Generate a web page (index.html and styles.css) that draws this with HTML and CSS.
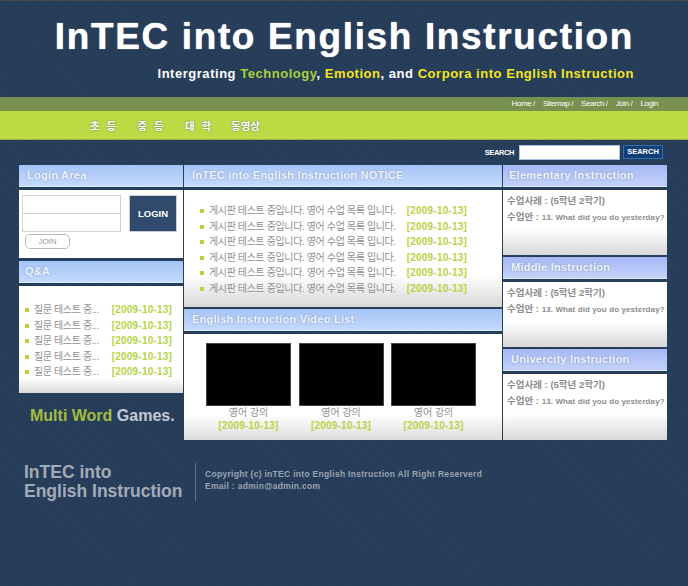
FILE: index.html
```html
<!DOCTYPE html>
<html lang="ko">

<head>
    <meta charset="UTF-8">
    <meta name="viewport" content="width=device-width, initial-scale=1.0">
    <title>InTEC into English Instruction</title>
    <link rel="stylesheet" href="styles.css">
</head>

<body>
    <header class="top">
        <h1>InTEC into English Instruction</h1>
        <p class="slogan">Intergrating <span class="green">Technology</span>, <span class="yellow">Emotion</span>, and <span class="yellow">Corpora into English Instruction</span></p>
    </header>

    <div class="util">
        <a>Home /</a><a>Sitemap /</a><a>Search /</a><a>Join /</a><a>Login</a>
    </div>
    <nav class="menu">
        <a class="m1">초 등</a><a class="m2">중 등</a><a class="m3">대 학</a><a class="m4">동영상</a>
    </nav>

    <form class="search">
        <label>SEARCH</label>
        <input type="text" class="search-input">
        <button type="button" class="search-btn">SEARCH</button>
    </form>

    <main class="columns">
        <div class="col col-left">
            <h2 class="bar">Login Area</h2>
            <section class="box login">
                <div class="login-row">
                    <div class="fields">
                        <input type="text">
                        <input type="password">
                    </div>
                    <button type="button" class="login-btn">LOGIN</button>
                </div>
                <button type="button" class="join-btn">JOIN</button>
            </section>
            <h2 class="bar bar-qa">Q&amp;A</h2>
            <section class="box qa">
                <ul class="list">
                    <li><span class="t">질문 테스트 중...</span><span class="date">[2009-10-13]</span></li>
                    <li><span class="t">질문 테스트 중...</span><span class="date">[2009-10-13]</span></li>
                    <li><span class="t">질문 테스트 중...</span><span class="date">[2009-10-13]</span></li>
                    <li><span class="t">질문 테스트 중...</span><span class="date">[2009-10-13]</span></li>
                    <li><span class="t">질문 테스트 중...</span><span class="date">[2009-10-13]</span></li>
                </ul>
            </section>
            <div class="games"><span class="olive">Multi Word</span> Games.</div>
        </div>

        <div class="col col-mid">
            <h2 class="bar">InTEC into English Instruction NOTICE</h2>
            <section class="box notice">
                <ul class="list">
                    <li><span class="t">게시판 테스트 중입니다. 영어 수업 목록 입니다.</span><span class="date">[2009-10-13]</span></li>
                    <li><span class="t">게시판 테스트 중입니다. 영어 수업 목록 입니다.</span><span class="date">[2009-10-13]</span></li>
                    <li><span class="t">게시판 테스트 중입니다. 영어 수업 목록 입니다.</span><span class="date">[2009-10-13]</span></li>
                    <li><span class="t">게시판 테스트 중입니다. 영어 수업 목록 입니다.</span><span class="date">[2009-10-13]</span></li>
                    <li><span class="t">게시판 테스트 중입니다. 영어 수업 목록 입니다.</span><span class="date">[2009-10-13]</span></li>
                    <li><span class="t">게시판 테스트 중입니다. 영어 수업 목록 입니다.</span><span class="date">[2009-10-13]</span></li>
                </ul>
            </section>
            <h2 class="bar bar-video">English Instruction Video List</h2>
            <section class="box videos">
                <div class="video"><div class="thumb"></div><p>영어 강의</p><span class="date">[2009-10-13]</span></div>
                <div class="video"><div class="thumb"></div><p>영어 강의</p><span class="date">[2009-10-13]</span></div>
                <div class="video"><div class="thumb"></div><p>영어 강의</p><span class="date">[2009-10-13]</span></div>
            </section>
        </div>

        <div class="col col-right">
            <h2 class="bar bar-purple bar-first">Elementary Instruction</h2>
            <section class="box lesson">
                <p>수업사례 : (5학년 2학기)</p>
                <p>수업안 : <span class="en">13. What did you do yesterday?</span></p>
            </section>
            <h2 class="bar bar-purple">Middle Instruction</h2>
            <section class="box lesson">
                <p>수업사례 : (5학년 2학기)</p>
                <p>수업안 : <span class="en">13. What did you do yesterday?</span></p>
            </section>
            <h2 class="bar bar-purple">Univercity Instruction</h2>
            <section class="box lesson">
                <p>수업사례 : (5학년 2학기)</p>
                <p>수업안 : <span class="en">13. What did you do yesterday?</span></p>
            </section>
        </div>
    </main>

    <footer class="bottom">
        <div class="foot-logo">InTEC into<br>English Instruction</div>
        <div class="foot-text">
            <p>Copyright (c) inTEC into English Instruction All Right Reserverd</p>
            <p>Email : admin@admin.com</p>
        </div>
    </footer>
</body>

</html>
```

FILE: styles.css
```css
* {
    box-sizing: border-box;
}

html, body {
    height: 100%;
}

body {
    margin: 0;
    font-family: "Liberation Sans", "Noto Sans CJK KR", sans-serif;
    color: #8a8a8a;
    overflow: hidden;
    border-top: 1px solid #4a4a50;
    background-color: #263d5a;
    background-image:
        repeating-linear-gradient(45deg, rgba(255, 255, 255, 0.012) 0 1px, transparent 1px 2px),
        repeating-linear-gradient(-45deg, rgba(0, 0, 0, 0.025) 0 1px, transparent 1px 2px);
}

h1, h2, p, ul {
    margin: 0;
    padding: 0;
}

/* header */
.top {
    height: 96px;
    padding: 16px 54px 0 0;
    text-align: right;
}

.top h1 {
    font-size: 37px;
    line-height: 40px;
    letter-spacing: 1.63px;
    color: #fff;
    text-shadow: 0 0 1px #fff;
}

.slogan {
    margin-top: 9px;
    font-size: 13px;
    line-height: 16px;
    font-weight: bold;
    letter-spacing: 0.53px;
    color: #fff;
}

.green {
    color: #a9cf3f;
}

.yellow {
    color: #f6e61a;
}

/* menus */
.util {
    height: 14px;
    padding-right: 30px;
    background: #789050;
    display: flex;
    justify-content: flex-end;
    gap: 8px;
    font-size: 8px;
    line-height: 14px;
    letter-spacing: -0.4px;
    color: #fff;
}

.menu {
    height: 29px;
    padding: 3px 0 0 90px;
    background: #bcdb44;
    border-bottom: 1px solid #98b23a;
    display: flex;
    font-size: 10.5px;
    font-weight: bold;
    line-height: 25px;
    color: #fff;
    text-shadow: 0 0 2px #666;
}

.m1, .m2, .m3 {
    width: 47.5px;
    letter-spacing: 2px;
}

.m3 {
    width: 46px;
}

.search {
    height: 25px;
    padding: 5px 25px 0 0;
    display: flex;
    justify-content: flex-end;
    align-items: flex-start;
}

.search label {
    font-size: 7.5px;
    font-weight: bold;
    line-height: 15px;
    letter-spacing: -0.4px;
    margin-right: 5px;
    color: #fff;
}

.search-input {
    width: 101px;
    height: 15px;
    margin: 0 3px 0 0;
    padding: 0;
    border: 1px solid #a9c4ee;
    background: #fff;
}

.search-btn {
    width: 40px;
    height: 14px;
    padding: 0;
    border: 1px solid #2e6fb0;
    background: #123f78;
    color: #fff;
    font: bold 7.5px/12px "Liberation Sans", sans-serif;
}

/* columns */
.columns {
    display: flex;
    gap: 1px;
    padding-left: 19px;
}

.col {
    display: flex;
    flex-direction: column;
}

.col-left {
    width: 164px;
}

.col-mid {
    width: 318px;
}

.col-right {
    width: 164px;
}

.bar {
    height: 22px;
    padding-left: 8px;
    font-size: 11px;
    line-height: 21px;
    letter-spacing: 0.25px;
    color: #eef3fb;
    text-shadow: 0 0 2px rgba(90, 110, 150, 0.6);
    background: linear-gradient(#a4c4f7, #c4d9fb);
    border-bottom: 1px solid #dfe9f8;
}

.bar-purple {
    background: linear-gradient(#a5b8f5, #c3d2fa);
}

.box {
    margin-top: 3px;
    background: linear-gradient(#fff 0, #fff 72%, #d8d8d8 100%);
}

/* login */
.login {
    height: 68px;
    padding: 5px 6px 0 3px;
    background: #fff;
}

.login-row {
    display: flex;
    justify-content: space-between;
}

.fields {
    width: 99px;
    height: 37px;
    display: flex;
    flex-direction: column;
}

.fields input {
    width: 100%;
    height: 19px;
    margin: 0;
    padding: 0;
    border: 1px solid #d2d2d2;
    background: #fff;
}

.fields input + input {
    margin-top: -1px;
}

.login-btn {
    width: 48px;
    height: 37px;
    padding: 0;
    border: 1px solid #c9ced4;
    background: #2f4a6c;
    color: #fff;
    font: bold 9.5px "Liberation Sans", sans-serif;
}

.join-btn {
    display: block;
    width: 45px;
    height: 15px;
    margin: 2px 0 0 3px;
    padding: 0;
    border: 1px solid #bbb;
    border-radius: 5px;
    background: #fff;
    color: #999;
    font: 8px "Liberation Sans", sans-serif;
}

.bar-qa {
    margin-top: 3px;
    padding-left: 6px;
}

/* lists */
.list {
    list-style: none;
}

.list li {
    display: flex;
    justify-content: space-between;
    height: 15.6px;
    padding-left: 6px;
    font-size: 10px;
    line-height: 15.6px;
    color: #909090;
    white-space: nowrap;
}

.list li::before {
    content: "";
    width: 4px;
    height: 4px;
    margin: 6px 5px 0 0;
    background: #b5d33f;
    flex: none;
}

.list .t {
    flex: 1;
    letter-spacing: -0.38px;
}

.date {
    font-size: 10px;
    font-weight: bold;
    letter-spacing: 0.2px;
    white-space: nowrap;
    color: #b7d444;
}

.qa {
    height: 107px;
    padding: 16px 11px 0 0;
    background: linear-gradient(#fff 0, #fff 86%, #d8d8d8 100%);
}

.games {
    height: 47px;
    padding: 13px 0 0 11px;
    font-size: 16px;
    line-height: 20px;
    font-weight: bold;
    color: #c3cad6;
}

.olive {
    color: #a3bc40;
}

.notice {
    height: 117px;
    padding: 13px 35px 0 10px;
}

.bar-video {
    margin-top: 2px;
}

.videos {
    height: 106px;
    padding: 9px 0 0 22px;
    display: flex;
    gap: 7.5px;
    background: linear-gradient(#fff 0, #fff 76%, #dcdcdc 100%);
}

.video {
    width: 85px;
    text-align: center;
}

.thumb {
    height: 63px;
    background: #000;
    border: 1px solid #444;
}

.video p {
    font-size: 10px;
    line-height: 14px;
    margin-bottom: -1px;
    color: #909090;
}

.video .date {
    display: block;
    line-height: 13px;
}

/* right column */
.col-right .bar {
    padding-left: 8px;
}

.col-right .bar-first {
    padding-left: 6px;
}

.lesson {
    height: 65px;
    padding: 3px 0 0 4px;
    background: linear-gradient(#fff 0, #fff 60%, #d8d8d8 100%);
}

.lesson p {
    font-size: 9.5px;
    font-weight: bold;
    line-height: 15.5px;
    white-space: nowrap;
    color: #8c8c8c;
}

.lesson .en {
    font-size: 8px;
    letter-spacing: 0.1px;
}

.col-right .lesson + .bar {
    margin-top: 2px;
}

.col-right .lesson:last-child {
    height: 66px;
}

/* footer */
.bottom {
    display: flex;
    padding: 23px 0 0 24px;
}

.foot-logo {
    width: 171px;
    font-size: 17.5px;
    line-height: 19px;
    font-weight: bold;
    color: #a3abb8;
}

.foot-text {
    padding: 6px 0 2px 9px;
    border-left: 1px solid #5f7185;
    font-size: 8.5px;
    line-height: 11.5px;
    font-weight: bold;
    letter-spacing: 0.3px;
    color: #9aa3b2;
}
```
